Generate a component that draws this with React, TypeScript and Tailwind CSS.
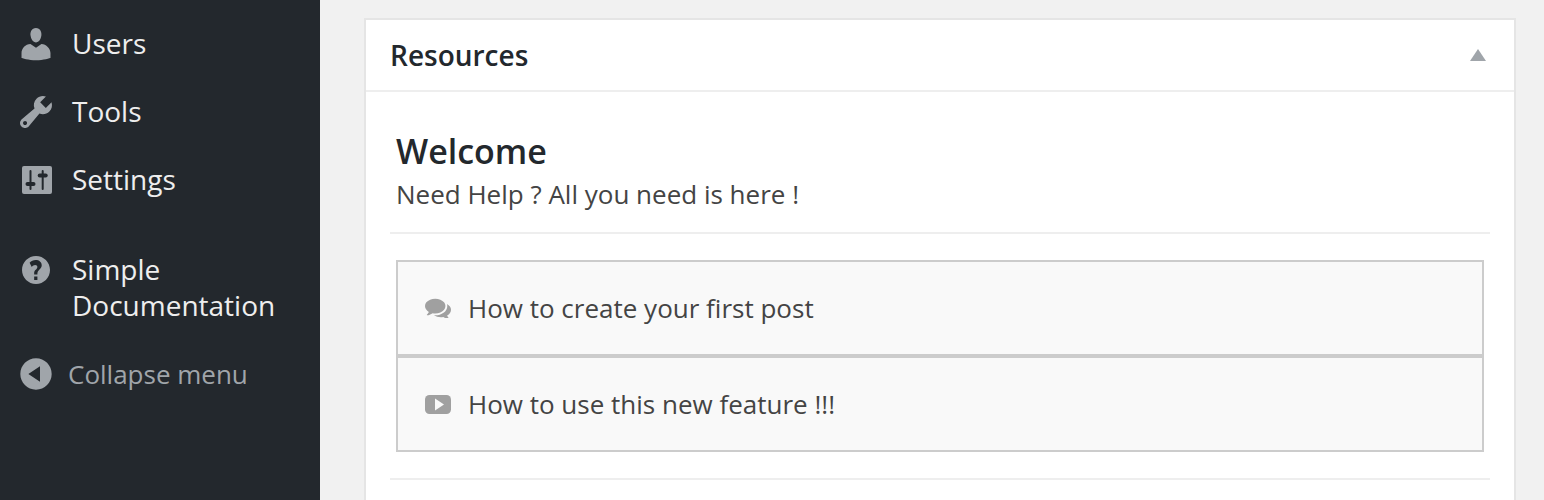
import React from "react";

const font = "font-['Open_Sans',sans-serif]";

const paths = {
  users:
    "M10 9.25c-2.27 0-2.73-3.44-2.73-3.44C7 4.02 7.82 2 9.97 2c2.16 0 2.98 2.02 2.71 3.81 0 0-.41 3.44-2.68 3.44zm0 2.57L12.72 10c2.39 0 4.52 2.33 4.52 4.53v2.49s-3.65 1.13-7.24 1.13c-3.65 0-7.24-1.13-7.24-1.13v-2.49c0-2.25 1.94-4.48 4.47-4.48z",
  tools:
    "M16.68 9.77c-1.34 1.34-3.3 1.67-4.95.99l-5.41 6.52c-.99.99-2.59.99-3.58 0s-.99-2.59 0-3.57l6.52-5.42c-.68-1.65-.35-3.61.99-4.95 1.28-1.28 3.12-1.62 4.72-1.06l-2.89 2.89 2.82 2.82 2.86-2.87c.53 1.58.18 3.39-1.08 4.65zM3.81 16.21c.4.39 1.04.39 1.43 0 .4-.4.4-1.04 0-1.43-.39-.4-1.03-.4-1.43 0-.39.39-.39 1.03 0 1.43z",
  help:
    "M17 10c0-3.87-3.14-7-7-7-3.87 0-7 3.13-7 7 0 3.86 3.13 7 7 7 3.86 0 7-3.14 7-7zm-6.3 5H9.08v-1.75h1.62V15zm0-3.32v.6H9.08v-.85c0-1.51 1.6-1.74 1.6-2.95 0-.53-.47-.93-1.11-.93-.62 0-1.14.36-1.69.91L6.8 6.37c.91-.86 1.78-1.37 3.03-1.37 1.73 0 3.03.98 3.03 2.62 0 1.89-1.96 2.16-2.16 4.06z",
  collapse:
    "M10 2.16c4.33 0 7.84 3.51 7.84 7.84s-3.51 7.84-7.84 7.84S2.16 14.33 2.16 10 5.71 2.16 10 2.16zm2 11.72V6.12L6.18 9.97z",
};

function Dash({ d, className = "" }: { d: string; className?: string }) {
  return (
    <svg viewBox="0 0 20 20" className={`w-10 h-10 shrink-0 fill-[#a0a5aa] ${className}`} fillRule="evenodd">
      <path d={d} />
    </svg>
  );
}

function SettingsIcon() {
  return (
    <svg viewBox="0 0 40 40" className="w-10 h-10 shrink-0">
      <rect x="6" y="6" width="30" height="28" rx="2" fill="#a0a5aa" />
      <rect x="13.5" y="10" width="2" height="20" rx="1" fill="#23282d" />
      <rect x="9.5" y="22" width="10" height="4" rx="2" fill="#23282d" />
      <rect x="25.7" y="10" width="2" height="20" rx="1" fill="#23282d" />
      <rect x="21.7" y="13.5" width="10" height="4" rx="2" fill="#23282d" />
    </svg>
  );
}

function CommentsIcon() {
  return (
    <svg viewBox="0 256 1792 1288" className="w-[26px] h-[20px] fill-[#a0a0a0]">
      <path d="M1408 768q0 139-94 257t-256.5 186.5-353.5 68.5q-86 0-176-16-124 88-278 128-36 9-86 16h-3q-11 0-20.5-8t-11.5-21q-1-3-1-6.5t.5-6.5 2-6l2.5-5 3.5-5.5 4-5 4.5-5 4-4.5q5-6 23-25t26-29.5 22.5-29 25-38.5 20.5-44q-124-72-195-177t-71-224q0-139 94-257t256.5-186.5 353.5-68.5 353.5 68.5 256.5 186.5 94 257zm384 256q0 120-71 224.5t-195 176.5q10 24 20.5 44t25 38.5 22.5 29 26 29.5 23 25q1 1 4 4.5t4.5 5 4 5 3.5 5.5l2.5 5 2 6 .5 6.5-1 6.5q-3 14-13 22t-22 7q-50-7-86-16-154-40-278-128-90 16-176 16-271 0-472-132 58 4 88 4 161 0 309-45t264-129q125-92 192-212t67-254q0-77-23-152 129 71 204 178t75 230z" />
    </svg>
  );
}

function PlayIcon() {
  return (
    <svg viewBox="0 0 26 19" className="w-[26px] h-[19px]">
      <rect width="26" height="19" rx="4.5" fill="#a0a0a0" />
      <path d="M10 3.5l9 6-9 6z" fill="#f9f9f9" />
    </svg>
  );
}

function MenuRow({ icon, label }: { icon: React.ReactNode; label: string }) {
  return (
    <div className="flex items-center h-[68px] pl-4 gap-4 text-[28px] leading-9 text-[#eeeeee]">
      {icon}
      <span className="pb-[2px]">{label}</span>
    </div>
  );
}

function LinkRow({ icon, label }: { icon: React.ReactNode; label: string }) {
  return (
    <div className="flex items-center h-24 pl-[27px] border-2 border-[#cccccc] bg-[#f9f9f9] text-[26px] text-[#444444]">
      <span className="w-[26px] mr-[17px] flex justify-center">{icon}</span>
      <span>{label}</span>
    </div>
  );
}

export default function App() {
  return (
    <div className={`${font} flex h-[500px] overflow-hidden bg-[#f1f1f1]`}>
      <aside className="w-80 shrink-0 bg-[#23282d] pt-[10px]">
        <MenuRow icon={<Dash d={paths.users} />} label="Users" />
        <MenuRow icon={<Dash d={paths.tools} />} label="Tools" />
        <MenuRow icon={<SettingsIcon />} label="Settings" />
        <div className="flex items-start mt-[37px] pl-4 gap-4 text-[28px] leading-9 text-[#eeeeee]">
          <Dash d={paths.help} className="-mt-px" />
          <span>
            Simple
            <br />
            Documentation
          </span>
        </div>
        <div className="flex items-center mt-[31px] pl-4 gap-3 text-[26px] leading-10 text-[#a0a5aa]">
          <Dash d={paths.collapse} />
          <span>Collapse menu</span>
        </div>
      </aside>
      <main className="flex-1 pl-11 pr-7 pt-[18px]">
        <section className="border-2 border-[#e5e5e5] bg-white h-[600px]">
          <header className="flex items-center justify-between h-[72px] pl-6 pr-7 border-b-2 border-[#eeeeee]">
            <h2 className="text-[28px] font-semibold text-[#23282d]">Resources</h2>
            <svg viewBox="0 0 16 12" className="w-4 h-3 fill-[#a0a5aa]">
              <path d="M8 0l8 12H0z" />
            </svg>
          </header>
          <div className="px-6 pt-[39px]">
            <div className="pl-1.5 pb-[15px] border-b-2 border-[#eeeeee]">
              <h1 className="text-[34px] leading-10 font-semibold text-[#23282d]">Welcome</h1>
              <p className="text-[26px] leading-[46px] text-[#444444]">Need Help ? All you need is here !</p>
            </div>
            <div className="mx-1.5 mt-[26px]">
              <LinkRow icon={<CommentsIcon />} label="How to create your first post" />
              <LinkRow icon={<PlayIcon />} label="How to use this new feature !!!" />
            </div>
            <div className="mt-[26px] border-b-2 border-[#eeeeee]" />
          </div>
        </section>
      </main>
    </div>
  );
}
